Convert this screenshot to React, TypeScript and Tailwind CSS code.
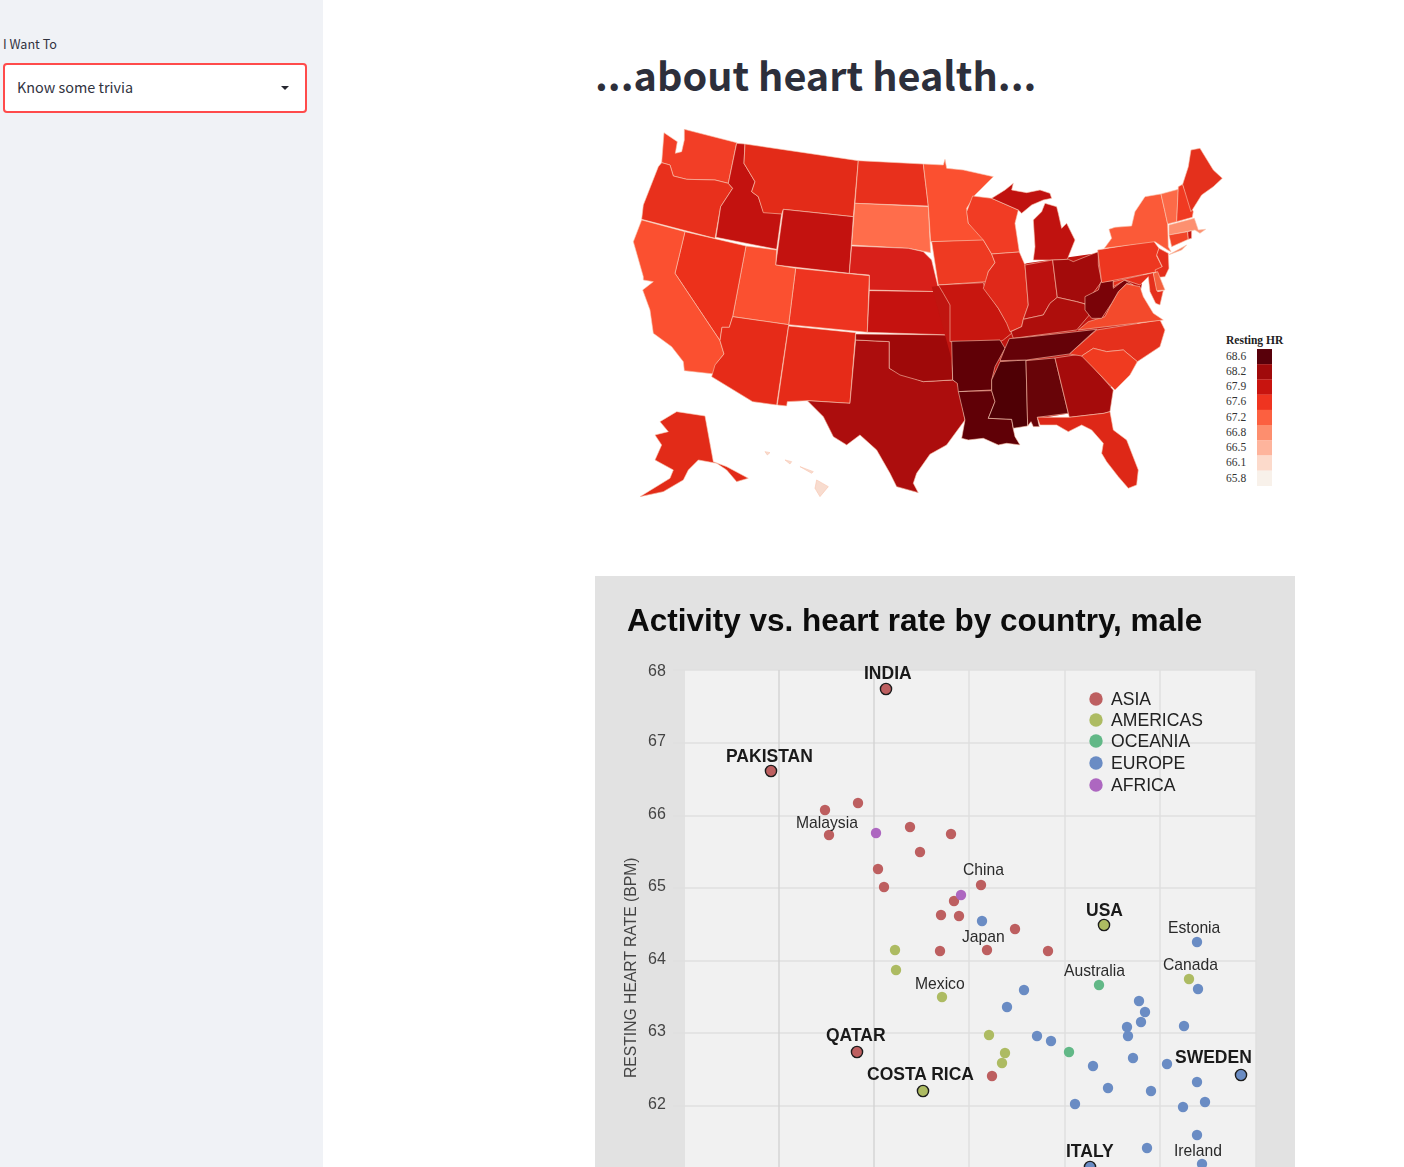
type Shape = [string, string];

// traced from the map, each list in the coordinates of its own crop
const west: Shape[] = [
  ["#f23e26", "283,28 440,68 415,190 375,180 290,178 250,168 240,135 215,128 222,38 262,65 256,100 275,95 283,60"],
  ["#e8301c", "215,128 240,135 250,168 290,178 375,180 415,190 428,205 392,260 375,355 155,298 160,255 205,140"],
  ["#c3120f", "440,70 465,72 462,130 495,185 485,215 505,230 520,275 575,280 560,388 378,352 392,260 428,205 415,190"],
  ["#e32b18", "465,72 805,122 790,290 580,268 575,282 520,278 505,230 485,215 495,185 462,130"],
  ["#e8301c", "805,122 1000,132 1015,258 795,250"],
  ["#ff6d4b", "795,250 1015,260 1022,398 955,385 785,375"],
  ["#c3120f", "580,268 790,290 778,460 557,435"],
  ["#d8201a", "785,378 955,385 1000,395 1025,420 1048,515 838,510 838,465 778,460"],
  ["#ee3420", "617,445 838,467 832,637 596,614"],
  ["#fb5030", "468,378 560,390 557,435 617,445 596,614 428,590"],
  ["#ec311b", "285,335 468,378 428,590 418,622 396,622 390,662 255,460"],
  ["#fb5030", "155,300 285,335 255,460 390,662 402,702 380,730 372,762 283,752 280,725 245,680 190,640 180,570 158,510 190,485 160,480 160,470 140,400 130,365"],
  ["#e62b18", "428,590 596,614 560,855 488,845 365,770 375,735 402,702 390,662 396,622 418,622"],
  ["#e62b18", "596,618 797,638 780,850 652,842 592,845 590,858 562,855"],
  ["#ac0d0d", "797,660 898,665 898,745 930,760 1000,785 1088,780 1105,790 1125,900 1070,975 1020,1003 980,1060 970,1090 985,1118 920,1100 900,1060 860,990 810,945 770,975 730,950 700,890 652,842 780,850"],
  ["#9f0909", "797,642 1085,645 1088,780 1000,785 930,765 898,745 898,665 797,660"],
  ["#c5120f", "838,512 1048,515 1068,550 1085,560 1085,645 832,637"],
  ["#e22b18", "210,905 260,875 345,888 370,1025 410,1040 475,1075 440,1085 410,1050 380,1030 325,1020 295,1050 280,1080 220,1115 150,1130 240,1075 250,1050 195,1020 215,975 195,945 235,935"],
  ["#f8dccf", "680,1080 715,1100 690,1130 675,1105"],
  ["#f8dccf", "585,1020 605,1025 600,1032"],
  ["#f8dccf", "525,995 540,998 532,1005"],
  ["#f8dccf", "630,1040 670,1055 665,1060"],
];

// sits under the eastern states so no white shows between them
const backing: Shape[] = [
  ["#c01510", "5,500 170,480 290,430 500,400 640,460 620,600 640,700 560,790 420,880 300,900 80,800 60,700"],
];

const minnesota: Shape[] = [
  ["#fb5030", "-20,132 40,135 45,118 50,145 100,150 190,170 135,225 110,265 115,310 160,345 160,362 2,365 -5,258"],
];

const midwest: Shape[] = [
  ["#ee3a22", "-55,185 100,180 125,222 135,248 115,275 110,305 -35,315"],
  ["#c8160f", "-35,315 100,308 105,325 145,385 175,435 185,460 160,480 150,485 0,485 0,375 -20,340"],
  ["#f13c24", "68,48 125,55 205,90 195,130 208,216 125,222 100,180 55,130 50,95"],
  ["#c0120f", "125,55 165,30 190,10 185,30 230,38 270,30 300,40 305,55 280,60 245,75 215,100 205,90"],
  ["#c0120f", "250,240 255,200 250,120 275,95 285,70 320,80 325,100 335,145 350,130 375,180 352,238 310,240"],
  ["#e0291a", "125,222 208,216 225,255 235,375 220,418 215,440 180,455 170,430 145,385 100,325 115,275 135,248"],
  ["#bc110f", "225,255 308,240 322,352 300,370 280,405 220,418 235,375"],
  ["#a30b0b", "308,240 355,238 370,245 445,215 445,255 455,305 405,372 380,365 322,352"],
  ["#ae0e0c", "220,418 280,405 300,370 322,352 380,365 405,372 418,405 380,450 190,475 183,455 215,440"],
];

const south: Shape[] = [
  ["#600006", "5,34 150,30 165,55 135,110 125,150 125,180 25,185 22,160 8,150"],
  ["#600006", "25,185 125,182 135,215 115,265 185,268 190,298 195,320 210,345 170,340 145,345 100,325 55,330 35,325 45,270"],
  ["#4f0005", "150,95 228,90 233,288 190,295 185,268 115,265 135,215 125,182 125,150"],
  ["#680408", "228,92 315,84 355,250 262,262 268,290 250,290 243,275 233,288"],
  ["#a50b0b", "315,84 395,72 490,180 480,245 462,250 358,262"],
  ["#de2817", "262,262 358,262 462,250 480,245 490,300 530,330 565,420 560,465 535,475 505,440 470,395 455,370 460,340 425,300 395,285 355,305 320,285 270,285"],
  ["#e5301c", "358,72 440,0 630,-30 645,0 630,50 562,95 520,60 470,65 430,55 395,78"],
  ["#f03b20", "395,78 430,55 470,65 520,60 562,95 540,135 495,180"],
  ["#650208", "150,92 165,55 178,26 225,22 380,5 440,-2 420,15 358,72 230,90"],
];

const northeast: Shape[] = [
  ["#f34a2c", "-20,570 10,545 60,530 80,490 100,455 125,432 165,440 175,470 205,520 235,540"],
  ["#7a0308", "0,470 40,450 48,425 85,422 85,445 118,420 145,435 125,430 100,455 80,490 50,535 20,535 0,510"],
  ["#ee3720", "38,330 205,302 222,325 215,348 232,382 218,395 50,428"],
  ["#fb5a38", "58,325 80,295 72,268 90,262 140,258 150,215 180,170 228,162 240,215 248,252 250,320 258,335 248,330 210,305"],
  ["#e52f1c", "215,345 222,325 250,340 252,385 240,410 222,412 210,390 232,380"],
  ["#e52f1c", "85,425 205,398 218,455 235,452 225,495 212,490 195,455 190,410 165,435 120,420 85,440"],
  ["#f4613f", "205,400 218,395 240,450 215,452"],
  ["#fc6a48", "228,162 280,148 275,245 248,252 240,215"],
  ["#f03a22", "280,140 293,133 325,215 322,232 275,245"],
  ["#e4301c", "293,133 310,80 318,30 345,25 385,90 412,115 385,140 350,165 325,205 318,215"],
  ["#fd9070", "252,255 328,235 340,270 362,268 345,280 330,270 252,285"],
  ["#f24528", "252,285 308,275 310,298 260,320"],
  ["#c81710", "308,275 320,272 320,295 310,298"],
  ["#f9825f", "250,345 305,315 290,330"],
];

const legendColors = ["#58000a", "#a00a0b", "#c8140f", "#ef3420", "#fc6040", "#fd8e6e", "#feb49c", "#fcdacb", "#f8f1ea"];
const legendValues = ["68.6", "68.2", "67.9", "67.6", "67.2", "66.8", "66.5", "66.1", "65.8"];

const ASIA = "#bd5f60";
const AMERICAS = "#adbb62";
const OCEANIA = "#62b887";
const EUROPE = "#6a8cc4";
const AFRICA = "#ad67c0";

const groups: [string, number[][]][] = [
  [ASIA, [[825, 810], [858, 803], [829, 835], [910, 827], [951, 834], [920, 852], [878, 869], [884, 887], [981, 885], [954, 901], [941, 915], [959, 916], [1015, 929], [940, 951], [987, 950], [1048, 951], [992, 1076]]],
  [AFRICA, [[876, 833], [961, 895]]],
  [AMERICAS, [[895, 950], [896, 970], [942, 997], [989, 1035], [1005, 1053], [1002, 1063], [1189, 979]]],
  [OCEANIA, [[1099, 985], [1069, 1052]]],
  [EUROPE, [[982, 921], [1024, 990], [1007, 1007], [1037, 1036], [1051, 1041], [1139, 1001], [1145, 1012], [1141, 1022], [1127, 1027], [1128, 1036], [1184, 1026], [1197, 942], [1198, 989], [1133, 1058], [1093, 1066], [1167, 1064], [1197, 1082], [1108, 1088], [1151, 1091], [1205, 1102], [1183, 1107], [1075, 1104], [1197, 1135], [1147, 1148], [1202, 1164]]],
];

const outlined: [string, number, number][] = [
  [ASIA, 886, 689], [ASIA, 771, 771], [ASIA, 857, 1052], [AMERICAS, 923, 1091], [AMERICAS, 1104, 925], [EUROPE, 1241, 1075], [EUROPE, 1090, 1167],
];

const boldLabels: [string, number, number][] = [
  ["INDIA", 864, 679], ["PAKISTAN", 726, 762], ["QATAR", 826, 1041], ["COSTA RICA", 867, 1080], ["USA", 1086, 916], ["SWEDEN", 1175, 1063], ["ITALY", 1066, 1157],
];

const labels: [string, number, number][] = [
  ["Malaysia", 796, 828], ["China", 963, 875], ["Japan", 962, 942], ["Estonia", 1168, 933], ["Canada", 1163, 970], ["Australia", 1064, 976], ["Mexico", 915, 989], ["Ireland", 1174, 1156],
];

const gridY = [670, 743, 816, 888, 961, 1033, 1106];
const gridX = [779, 874, 969, 1065, 1160];
const ticks: [string, number][] = [["68", 676], ["67", 746], ["66", 819], ["65", 891], ["64", 964], ["63", 1036], ["62", 1109]];

const chartLegend: [string, string, number][] = [
  [ASIA, "ASIA", 699], [AMERICAS, "AMERICAS", 720], [OCEANIA, "OCEANIA", 741], [EUROPE, "EUROPE", 763], [AFRICA, "AFRICA", 785],
];

const Shapes = ({ items, move }: { items: Shape[]; move?: string }) => (
  <g transform={move}>
    {items.map(([fill, points], i) => (
      <polygon key={i} fill={fill} points={points} />
    ))}
  </g>
);

const HeartMap = () => (
  <svg viewBox="595 120 700 440" className="block w-[700px] h-[440px]">
    <g className="blur-[0.4px]" stroke="#f9c4ae" strokeWidth="1.8" strokeLinejoin="round">
      <g transform="translate(590 120) scale(0.3333)">
        <Shapes items={west} />
      </g>
      <g transform="translate(930 120) scale(0.3333)">
        <g stroke="none">
          <Shapes items={backing} />
        </g>
        <Shapes items={minnesota} />
        <Shapes items={midwest} move="translate(60 180)" />
        <Shapes items={south} move="translate(60 630)" />
        <Shapes items={northeast} move="translate(465 60)" />
      </g>
    </g>
    <text x="1226" y="344" fontSize="11.5" fontWeight="700" fill="#222" fontFamily="'Liberation Serif', serif">Resting HR</text>
    {legendColors.map((color, i) => (
      <rect key={color} x="1257" y={349 + i * 15.2} width="15" height="15.4" fill={color} />
    ))}
    {legendValues.map((value, i) => (
      <text key={value} x="1226" y={359.5 + i * 15.25} fontSize="11.5" fill="#333" fontFamily="'Liberation Serif', serif">{value}</text>
    ))}
  </svg>
);

const ActivityChart = () => (
  <svg viewBox="595 576 700 600" className="block w-[700px] h-[600px] bg-[#e2e2e2]" fontFamily="'Liberation Sans', sans-serif">
    <g className="blur-[0.3px]">
      <rect x="685" y="670" width="571" height="520" fill="#f1f1f1" />
      {gridY.map((y) => (
        <line key={y} x1="673" x2="1256" y1={y} y2={y} stroke="#dfdfdf" strokeWidth="1.5" />
      ))}
      {gridX.map((x) => (
        <line key={x} x1={x} x2={x} y1="670" y2="1190" stroke={x < 900 ? "#d4d4d4" : "#dfdfdf"} strokeWidth="1.5" />
      ))}
      <line x1="1256" x2="1256" y1="670" y2="1190" stroke="#dfdfdf" strokeWidth="1.5" />
      <text x="627" y="631" fontSize="31.5" fontWeight="700" fill="#0c0c0c">Activity vs. heart rate by country, male</text>
      {ticks.map(([tick, y]) => (
        <text key={tick} x="648" y={y} fontSize="16" fill="#444">{tick}</text>
      ))}
      <text x="636" y="1078" fontSize="15.7" fill="#444" transform="rotate(-90 636 1078)">RESTING HEART RATE (BPM)</text>
      {chartLegend.map(([color, name, y]) => (
        <g key={name}>
          <circle cx="1096" cy={y} r="6.7" fill={color} />
          <text x="1111" y={y + 5.5} fontSize="17.6" fill="#222">{name}</text>
        </g>
      ))}
      {groups.map(([color, points]) =>
        points.map(([x, y]) => <circle key={`${x}-${y}`} cx={x} cy={y} r="5.2" fill={color} />)
      )}
      {outlined.map(([color, x, y]) => (
        <circle key={`${x}-${y}`} cx={x} cy={y} r="5.6" fill={color} stroke="#1c1c1c" strokeWidth="1.4" />
      ))}
      {boldLabels.map(([name, x, y]) => (
        <text key={name} x={x} y={y} fontSize="17.5" fontWeight="700" fill="#1a1a1a">{name}</text>
      ))}
      {labels.map(([name, x, y]) => (
        <text key={name} x={x} y={y} fontSize="15.7" fill="#2a2a2a">{name}</text>
      ))}
    </g>
  </svg>
);

const App = () => {
  return (
    <div className="flex h-screen overflow-hidden bg-white font-['Noto_Sans_CJK_SC',sans-serif] text-[#31333f]">
      <aside className="w-[323px] shrink-0 bg-[#f0f2f6] pl-[3px] pr-4 pt-[36px]">
        <p className="text-[12.6px] leading-4 mb-[11px]">I Want To</p>
        <div className="flex items-center justify-between h-[50px] bg-white border-2 border-[#ff4b4b] rounded-[4px] pl-3 pr-[16px]">
          <span className="text-[14.4px] leading-6 pb-[2px]">Know some trivia</span>
          <span className="w-0 h-0 border-x-[4px] border-x-transparent border-t-[4px] border-t-[#262730]" />
        </div>
      </aside>
      <main className="flex-1 pl-[272px] pt-[48px]">
        <h1 className="h-[54px] text-[39.6px] leading-[52px] font-bold text-[#2d2f3b] mb-[18px] whitespace-nowrap">...about heart health...</h1>
        <HeartMap />
        <div className="mt-4">
          <ActivityChart />
        </div>
      </main>
    </div>
  );
};

export default App;
